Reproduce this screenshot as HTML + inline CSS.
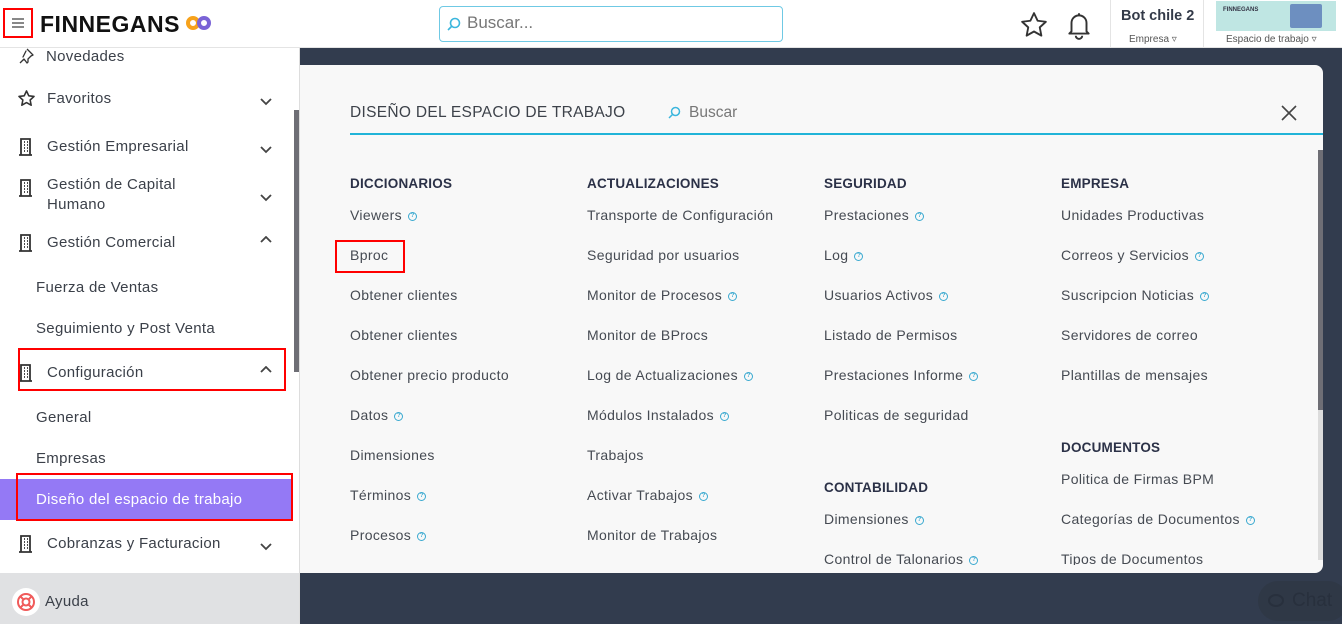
<!DOCTYPE html>
<html><head><meta charset="utf-8"><style>
*{margin:0;padding:0;box-sizing:border-box}
body{width:1342px;height:624px;overflow:hidden;position:relative;background:#323c4e;font-family:"Liberation Sans",sans-serif;color:#3a3f47}
.a{position:absolute;white-space:nowrap}
.t{font-size:14px;letter-spacing:.35px;line-height:20px;color:#454a52}
.h{font-size:13.5px;font-weight:bold;letter-spacing:.2px;line-height:20px;color:#2b3147}
.s{font-size:15px;letter-spacing:.3px;line-height:20px;color:#3b4049}
.q{display:inline-block;width:9px;height:9px;border:1.3px solid #3aa9d0;border-radius:50%;font-size:6px;line-height:7px;text-align:center;color:#3aa9d0;margin-left:6px;vertical-align:3px;letter-spacing:0;font-weight:bold}
.rb{position:absolute;border:2.5px solid #f00}
</style></head><body>
<!-- top bar -->
<div class="a" style="left:0;top:0;width:1342px;height:48px;background:#fff;border-bottom:1px solid #e4e4e4"></div>
<div class="rb" style="left:3px;top:8px;width:30px;height:30px"></div>
<div class="a" style="left:12px;top:18px;width:12px;height:1.5px;background:#888;box-shadow:0 4px 0 #888,0 8px 0 #888"></div>
<div class="a" style="left:40px;top:10px;font-size:23px;font-weight:bold;letter-spacing:.5px;color:#111;line-height:28px">FINNEGANS</div>
<svg class="a" style="left:186px;top:15px" width="26" height="16"><circle cx="7" cy="8" r="5" fill="none" stroke="#f7a21b" stroke-width="4"/><circle cx="18" cy="8" r="5" fill="none" stroke="#7a63d6" stroke-width="4"/></svg>
<div class="a" style="left:439px;top:6px;width:344px;height:36px;border:1px solid #6fc9e4;border-radius:4px;background:#fff"></div>
<svg class="a" style="left:446px;top:16px" width="16" height="16"><circle cx="9" cy="7" r="4.5" fill="none" stroke="#3bb6dd" stroke-width="1.6"/><line x1="6" y1="10" x2="2" y2="14" stroke="#3bb6dd" stroke-width="1.6"/></svg>
<div class="a" style="left:467px;top:12px;font-size:17px;color:#777;line-height:22px">Buscar...</div>
<svg class="a" style="left:1019px;top:10px" width="30" height="30" viewBox="0 0 24 24"><path d="M12 2.5l2.9 6.1 6.6.8-4.9 4.5 1.3 6.6L12 17.2l-5.9 3.3 1.3-6.6-4.9-4.5 6.6-.8z" fill="none" stroke="#333" stroke-width="1.5" stroke-linejoin="round"/></svg>
<svg class="a" style="left:1066px;top:10px" width="26" height="30" viewBox="0 0 24 28"><path d="M12 3v2M5 20V12a7 7 0 0114 0v8l2 2H3z M9 24a3 3 0 006 0" fill="none" stroke="#333" stroke-width="1.8" stroke-linejoin="round"/></svg>
<div class="a" style="left:1110px;top:0;width:1px;height:48px;background:#e4e4e4"></div>
<div class="a" style="left:1203px;top:0;width:1px;height:48px;background:#e4e4e4"></div>
<div class="a" style="left:1121px;top:7px;font-size:14.5px;font-weight:bold;color:#333a48;line-height:18px">Bot chile 2</div>
<div class="a" style="left:1129px;top:33px;font-size:10px;color:#555;line-height:14px">Empresa ▿</div>
<div class="a" style="left:1216px;top:1px;width:120px;height:30px;background:#bfe6e3"></div>
<div class="a" style="left:1223px;top:7px;font-size:6px;font-weight:bold;color:#334">FINNEGANS</div>
<div class="a" style="left:1290px;top:4px;width:32px;height:24px;background:#6d8fc0;border-radius:2px"></div>
<div class="a" style="left:1226px;top:33px;font-size:10px;color:#555;line-height:14px">Espacio de trabajo ▿</div>
<!-- sidebar -->
<div class="a" style="left:0;top:48px;width:300px;height:525px;background:#fff"></div>
<div class="a" style="left:294px;top:110px;width:5px;height:262px;background:#6e6e75"></div>
<div class="a" style="left:299px;top:48px;width:1px;height:576px;background:#ddd"></div>
<svg class="a" style="left:18px;top:48px" width="16" height="16" viewBox="0 0 16 16"><path d="M9 1l6 6-2 1-3 3 0 3-1 1-3-4-4 4M5 9l3-6z" fill="none" stroke="#333" stroke-width="1.3" stroke-linejoin="round"/></svg>
<div class="a s" style="left:46px;top:47px">Novedades</div>
<svg class="a" style="left:17px;top:89px" width="19" height="19" viewBox="0 0 24 24"><path d="M12 2.5l2.9 6.1 6.6.8-4.9 4.5 1.3 6.6L12 17.2l-5.9 3.3 1.3-6.6-4.9-4.5 6.6-.8z" fill="none" stroke="#333" stroke-width="2" stroke-linejoin="round"/></svg>
<div class="a s" style="left:47px;top:89px">Favoritos</div>
<div class="a s" style="left:47px;top:137px">Gestión Empresarial</div>
<div class="a s" style="left:47px;top:175px;line-height:20px">Gestión de Capital<br>Humano</div>
<div class="a s" style="left:47px;top:233px">Gestión Comercial</div>
<div class="a s" style="left:36px;top:278px">Fuerza de Ventas</div>
<div class="a s" style="left:36px;top:319px">Seguimiento y Post Venta</div>
<div class="a s" style="left:47px;top:363px">Configuración</div>
<div class="a s" style="left:36px;top:408px">General</div>
<div class="a s" style="left:36px;top:449px">Empresas</div>
<div class="a" style="left:0;top:479px;width:292px;height:41px;background:#9479f5"></div>
<div class="a s" style="left:36px;top:490px;color:#fff">Diseño del espacio de trabajo</div>
<div class="a s" style="left:47px;top:534px">Cobranzas y Facturacion</div>
<svg width="0" height="0" style="position:absolute"><defs><g id="b"><path d="M3 17V1h9v16M1 17h13M6 4h1M9 4h1M6 7h1M9 7h1M6 10h1M9 10h1M6 13h1M9 13h1" fill="none" stroke="#333" stroke-width="1.8"/></g><g id="cd"><path d="M1 1l5 5 5-5" fill="none" stroke="#444" stroke-width="1.8"/></g><g id="cu"><path d="M1 6l5-5 5 5" fill="none" stroke="#444" stroke-width="1.8"/></g></defs></svg>
<svg class="a" style="left:18px;top:138px" width="15" height="18"><use href="#b"/></svg>
<svg class="a" style="left:18px;top:179px" width="15" height="18"><use href="#b"/></svg>
<svg class="a" style="left:18px;top:234px" width="15" height="18"><use href="#b"/></svg>
<svg class="a" style="left:18px;top:364px" width="15" height="18"><use href="#b"/></svg>
<svg class="a" style="left:18px;top:535px" width="15" height="18"><use href="#b"/></svg>
<svg class="a" style="left:260px;top:98px" width="12" height="8"><use href="#cd"/></svg>
<svg class="a" style="left:260px;top:146px" width="12" height="8"><use href="#cd"/></svg>
<svg class="a" style="left:260px;top:194px" width="12" height="8"><use href="#cd"/></svg>
<svg class="a" style="left:260px;top:236px" width="12" height="8"><use href="#cu"/></svg>
<svg class="a" style="left:260px;top:366px" width="12" height="8"><use href="#cu"/></svg>
<svg class="a" style="left:260px;top:543px" width="12" height="8"><use href="#cd"/></svg>
<div class="rb" style="left:18px;top:348px;width:268px;height:43px"></div>
<div class="rb" style="left:16px;top:473px;width:277px;height:48px"></div>
<div class="a" style="left:0;top:573px;width:299px;height:51px;background:#e0e1e3"></div>
<div class="a" style="left:12px;top:588px;width:28px;height:28px;border-radius:50%;background:#fff"></div>
<svg class="a" style="left:16px;top:592px" width="20" height="20" viewBox="0 0 20 20"><circle cx="10" cy="10" r="8" fill="none" stroke="#f05a5a" stroke-width="2"/><circle cx="10" cy="10" r="3.5" fill="none" stroke="#f05a5a" stroke-width="2"/><path d="M4.5 4.5l3 3M15.5 4.5l-3 3M4.5 15.5l3-3M15.5 15.5l-3-3" stroke="#f05a5a" stroke-width="2"/></svg>
<div class="a s" style="left:45px;top:592px">Ayuda</div>
<!-- modal -->
<div class="a" style="left:300px;top:65px;width:1023px;height:508px;background:#f8f8f8;border-radius:0 8px 8px 0"></div>
<div class="a" style="left:350px;top:103px;font-size:15.5px;letter-spacing:.3px;color:#3d424a;line-height:20px">DISEÑO DEL ESPACIO DE TRABAJO</div>
<svg class="a" style="left:667px;top:106px" width="14" height="14"><circle cx="8.5" cy="5.5" r="4" fill="none" stroke="#3bb6dd" stroke-width="1.5"/><line x1="5.5" y1="8.5" x2="2" y2="12" stroke="#3bb6dd" stroke-width="1.5"/></svg>
<div class="a" style="left:689px;top:103px;font-size:15.5px;color:#777;line-height:20px">Buscar</div>
<svg class="a" style="left:1281px;top:105px" width="16" height="16"><path d="M1 1l14 14M15 1L1 15" stroke="#444" stroke-width="1.6"/></svg>
<div class="a" style="left:350px;top:133px;width:973px;height:2px;background:#21b4d8"></div>
<div class="a" style="left:1318px;top:150px;width:5px;height:410px;background:#dcdcdc"></div>
<div class="a" style="left:1318px;top:150px;width:5px;height:260px;background:#6e6e75"></div>
<div class="rb" style="left:335px;top:240px;width:70px;height:33px"></div>

<div class="a h" style="left:350px;top:174px">DICCIONARIOS</div>
<div class="a t" style="left:350px;top:205px">Viewers<span class="q">?</span></div>
<div class="a t" style="left:350px;top:245px">Bproc</div>
<div class="a t" style="left:350px;top:285px">Obtener clientes</div>
<div class="a t" style="left:350px;top:325px">Obtener clientes</div>
<div class="a t" style="left:350px;top:365px">Obtener precio producto</div>
<div class="a t" style="left:350px;top:405px">Datos<span class="q">?</span></div>
<div class="a t" style="left:350px;top:445px">Dimensiones</div>
<div class="a t" style="left:350px;top:485px">Términos<span class="q">?</span></div>
<div class="a t" style="left:350px;top:525px">Procesos<span class="q">?</span></div>

<div class="a h" style="left:587px;top:174px">ACTUALIZACIONES</div>
<div class="a t" style="left:587px;top:205px">Transporte de Configuración</div>
<div class="a t" style="left:587px;top:245px">Seguridad por usuarios</div>
<div class="a t" style="left:587px;top:285px">Monitor de Procesos<span class="q">?</span></div>
<div class="a t" style="left:587px;top:325px">Monitor de BProcs</div>
<div class="a t" style="left:587px;top:365px">Log de Actualizaciones<span class="q">?</span></div>
<div class="a t" style="left:587px;top:405px">Módulos Instalados<span class="q">?</span></div>
<div class="a t" style="left:587px;top:445px">Trabajos</div>
<div class="a t" style="left:587px;top:485px">Activar Trabajos<span class="q">?</span></div>
<div class="a t" style="left:587px;top:525px">Monitor de Trabajos</div>

<div class="a h" style="left:824px;top:174px">SEGURIDAD</div>
<div class="a t" style="left:824px;top:205px">Prestaciones<span class="q">?</span></div>
<div class="a t" style="left:824px;top:245px">Log<span class="q">?</span></div>
<div class="a t" style="left:824px;top:285px">Usuarios Activos<span class="q">?</span></div>
<div class="a t" style="left:824px;top:325px">Listado de Permisos</div>
<div class="a t" style="left:824px;top:365px">Prestaciones Informe<span class="q">?</span></div>
<div class="a t" style="left:824px;top:405px">Politicas de seguridad</div>
<div class="a h" style="left:824px;top:478px">CONTABILIDAD</div>
<div class="a t" style="left:824px;top:509px">Dimensiones<span class="q">?</span></div>

<div class="a h" style="left:1061px;top:174px">EMPRESA</div>
<div class="a t" style="left:1061px;top:205px">Unidades Productivas</div>
<div class="a t" style="left:1061px;top:245px">Correos y Servicios<span class="q">?</span></div>
<div class="a t" style="left:1061px;top:285px">Suscripcion Noticias<span class="q">?</span></div>
<div class="a t" style="left:1061px;top:325px">Servidores de correo</div>
<div class="a t" style="left:1061px;top:365px">Plantillas de mensajes</div>
<div class="a h" style="left:1061px;top:438px">DOCUMENTOS</div>
<div class="a t" style="left:1061px;top:469px">Politica de Firmas BPM</div>
<div class="a t" style="left:1061px;top:509px">Categorías de Documentos<span class="q">?</span></div>
<div class="a" style="left:820px;top:545px;width:495px;height:20px;overflow:hidden">
<div class="a t" style="left:4px;top:4px">Control de Talonarios<span class="q">?</span></div>
<div class="a t" style="left:241px;top:4px">Tipos de Documentos</div>
</div>
<!-- chat -->
<div class="a" style="left:1258px;top:581px;width:90px;height:40px;border-radius:20px;background:#2f3846"></div>
<div class="a" style="left:1292px;top:590px;font-size:19px;color:#28303d;line-height:22px">Chat</div>
<div class="a" style="left:1268px;top:594px;width:16px;height:13px;border:2px solid #28303d;border-radius:50%"></div>
</body></html>
